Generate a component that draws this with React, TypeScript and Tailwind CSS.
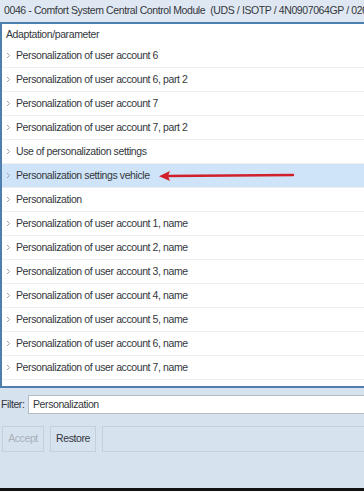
import React from "react";

const rows = [
  "Personalization of user account 6",
  "Personalization of user account 6, part 2",
  "Personalization of user account 7",
  "Personalization of user account 7, part 2",
  "Use of personalization settings",
  "Personalization settings vehicle",
  "Personalization",
  "Personalization of user account 1, name",
  "Personalization of user account 2, name",
  "Personalization of user account 3, name",
  "Personalization of user account 4, name",
  "Personalization of user account 5, name",
  "Personalization of user account 6, name",
  "Personalization of user account 7, name",
];

function Chevron() {
  return (
    <svg width="5" height="7" viewBox="0 0 5 7" className="mr-[5px] shrink-0">
      <path d="M1 1 L3.5 3.5 L1 6" fill="none" stroke="#9aa3ad" strokeWidth="1" />
    </svg>
  );
}

function Arrow() {
  return (
    <svg width="140" height="12" viewBox="0 0 140 12" className="absolute left-[155px] top-[6px]">
      <path d="M10 6 L136 5" stroke="#d0202c" strokeWidth="2.4" strokeLinecap="round" />
      <path d="M2 6.2 L13 1 L11 6 L13 11 Z" fill="#d0202c" />
    </svg>
  );
}

export default function App() {
  return (
    <div
      className="flex h-[491px] w-[364px] flex-col overflow-hidden bg-[#d7e2ef] text-[10.5px] tracking-[-0.4px] text-[#33373c]"
      style={{ fontFamily: "'Liberation Sans', Arial, sans-serif" }}
    >
      <div className="flex h-[24px] shrink-0 items-center whitespace-nowrap border-b-2 border-[#4f7fae] bg-[#dfe8f2] pl-[4px]">
        0046 - Comfort System Central Control Module&nbsp; (UDS / ISOTP / 4N0907064GP / 0264
      </div>
      <div className="flex h-[364px] shrink-0 flex-col overflow-hidden border-b-2 border-l-2 border-[#4f7fae] bg-white">
        <div className="flex h-[20px] shrink-0 items-center pl-[4px] pt-[2px]">Adaptation/parameter</div>
        {rows.map((r, i) => (
          <div
            key={r}
            className={
              "relative flex h-[24px] shrink-0 items-center border-b border-[#eceef1] pl-[4px] " +
              (i === 5 ? "bg-[#cfe4f8]" : "")
            }
          >
            <Chevron />
            <span className="whitespace-nowrap">{r}</span>
            {i === 5 && <Arrow />}
          </div>
        ))}
      </div>
      <div className="mt-[7px] flex h-[19px] shrink-0 items-center">
        <span className="w-[28px] whitespace-nowrap pl-[1px]">Filter:</span>
        <div className="flex h-full flex-1 items-center border border-r-0 border-[#b4bcc6] bg-white pl-[4px]">
          Personalization
        </div>
      </div>
      <div className="mt-[12px] flex h-[26px] shrink-0 gap-[6px] pl-[2px]">
        <div className="flex w-[42px] items-center justify-center border border-[#c5d0dc] text-[#a8b0ba]">Accept</div>
        <div className="flex w-[46px] items-center justify-center border border-[#c5d0dc]">Restore</div>
        <div className="flex-1 border border-r-0 border-[#c5d0dc]" />
      </div>
      <div className="flex-1" />
      <div className="h-[3px] shrink-0 bg-[#111]" />
    </div>
  );
}
